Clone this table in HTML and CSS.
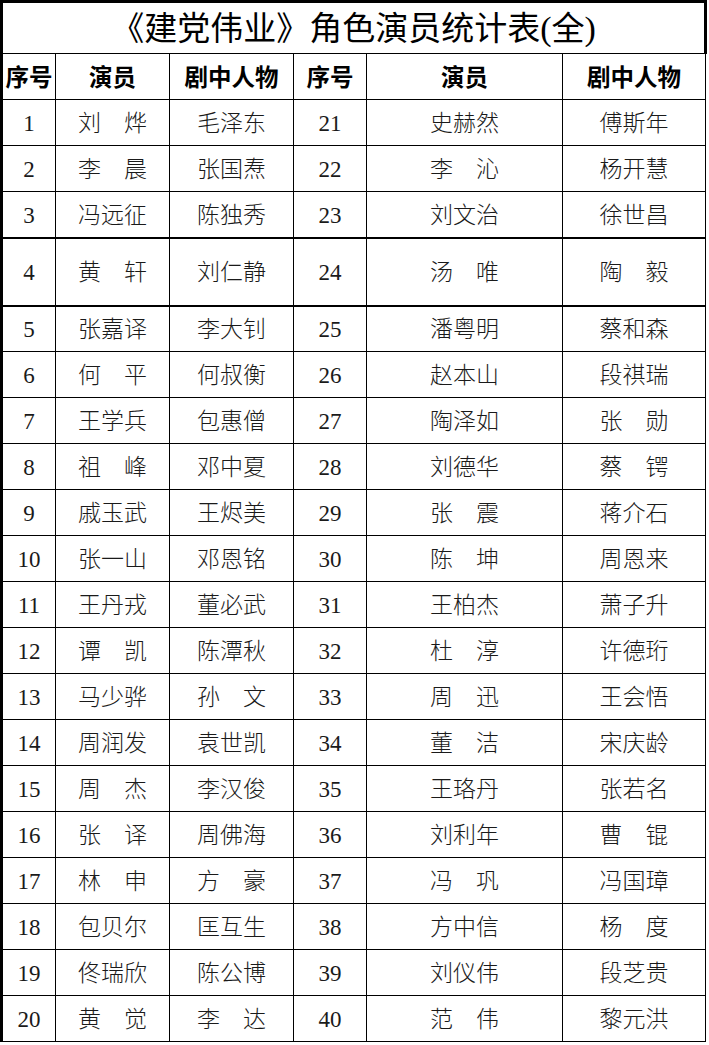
FILE: index.html
```html
<!DOCTYPE html>
<html lang="zh-CN">
<head>
<meta charset="utf-8">
<title>《建党伟业》角色演员统计表(全)</title>
<link rel="stylesheet" href="styles.css">
</head>
<body>
<table class="sheet">
  <colgroup>
    <col class="c-no"><col class="c-actor"><col class="c-role">
    <col class="c-no2"><col class="c-actor2"><col class="c-role2">
  </colgroup>
  <thead>
    <tr class="title-row"><th colspan="6" class="title">《建党伟业》角色演员统计表<span class="paren">(</span>全<span class="paren">)</span></th></tr>
    <tr class="head-row"><th>序号</th><th>演员</th><th>剧中人物</th><th>序号</th><th>演员</th><th>剧中人物</th></tr>
  </thead>
  <tbody>
    <tr><td>1</td><td>刘　烨</td><td>毛泽东</td><td>21</td><td>史赫然</td><td>傅斯年</td></tr>
    <tr><td>2</td><td>李　晨</td><td>张国焘</td><td>22</td><td>李　沁</td><td>杨开慧</td></tr>
    <tr class="r3"><td>3</td><td>冯远征</td><td>陈独秀</td><td>23</td><td>刘文治</td><td>徐世昌</td></tr>
    <tr class="tall"><td>4</td><td>黄　轩</td><td>刘仁静</td><td>24</td><td>汤　唯</td><td>陶　毅</td></tr>
    <tr class="after-tall"><td>5</td><td>张嘉译</td><td>李大钊</td><td>25</td><td>潘粤明</td><td>蔡和森</td></tr>
    <tr><td>6</td><td>何　平</td><td>何叔衡</td><td>26</td><td>赵本山</td><td>段祺瑞</td></tr>
    <tr><td>7</td><td>王学兵</td><td>包惠僧</td><td>27</td><td>陶泽如</td><td>张　勋</td></tr>
    <tr><td>8</td><td>祖　峰</td><td>邓中夏</td><td>28</td><td>刘德华</td><td>蔡　锷</td></tr>
    <tr><td>9</td><td>戚玉武</td><td>王烬美</td><td>29</td><td>张　震</td><td>蒋介石</td></tr>
    <tr><td>10</td><td>张一山</td><td>邓恩铭</td><td>30</td><td>陈　坤</td><td>周恩来</td></tr>
    <tr><td>11</td><td>王丹戎</td><td>董必武</td><td>31</td><td>王柏杰</td><td>萧子升</td></tr>
    <tr><td>12</td><td>谭　凯</td><td>陈潭秋</td><td>32</td><td>杜　淳</td><td>许德珩</td></tr>
    <tr><td>13</td><td>马少骅</td><td>孙　文</td><td>33</td><td>周　迅</td><td>王会悟</td></tr>
    <tr><td>14</td><td>周润发</td><td>袁世凯</td><td>34</td><td>董　洁</td><td>宋庆龄</td></tr>
    <tr><td>15</td><td>周　杰</td><td>李汉俊</td><td>35</td><td>王珞丹</td><td>张若名</td></tr>
    <tr><td>16</td><td>张　译</td><td>周佛海</td><td>36</td><td>刘利年</td><td>曹　锟</td></tr>
    <tr><td>17</td><td>林　申</td><td>方　豪</td><td>37</td><td>冯　巩</td><td>冯国璋</td></tr>
    <tr><td>18</td><td>包贝尔</td><td>匡互生</td><td>38</td><td>方中信</td><td>杨　度</td></tr>
    <tr><td>19</td><td>佟瑞欣</td><td>陈公博</td><td>39</td><td>刘仪伟</td><td>段芝贵</td></tr>
    <tr><td>20</td><td>黄　觉</td><td>李　达</td><td>40</td><td>范　伟</td><td>黎元洪</td></tr>
  </tbody>
</table>
</body>
</html>
```

FILE: styles.css
```css
html, body {
  margin: 0;
  padding: 0;
  background: #ffffff;
}

.sheet {
  border-collapse: collapse;
  table-layout: fixed;
  width: 707px;
  border-left: 3px solid #000;
  border-top: 3px solid #000;
  font-family: "Liberation Serif", "Noto Sans CJK SC", serif;
  color: #1a1a1a;
}

.c-no { width: 54px; }
.c-actor { width: 114px; }
.c-role { width: 124px; }
.c-no2 { width: 73px; }
.c-actor2 { width: 196px; }
.c-role2 { width: 143px; }

.sheet th,
.sheet td {
  border: 1px solid #000;
  padding: 0;
  text-align: center;
  vertical-align: middle;
  white-space: nowrap;
  overflow: hidden;
}

.title-row { height: 52px; }

.title {
  font-family: "Noto Sans CJK SC", sans-serif;
  font-size: 33px;
  font-weight: 400;
  color: #000;
  line-height: 1;
  padding-top: 2px;
  padding-left: 4px;
  border-right: 3px solid #000 !important;
}

.title .paren {
  font-family: "Liberation Serif", serif;
  font-size: 34px;
}

.head-row { height: 46px; }

.head-row th {
  font-family: "Noto Sans CJK SC", sans-serif;
  font-size: 23.5px;
  font-weight: 700;
  color: #000;
  line-height: 1;
}

.sheet tbody tr { height: 46px; }

.sheet td {
  font-size: 23px;
  font-weight: 300;
  line-height: 1;
  padding-top: 2px;
}

.sheet tr.r3 { height: 46px; }

.sheet tr.tall { height: 68px; }

.sheet tr.tall td { border-top: 2px solid #000; }

.sheet tr.after-tall td { border-top: 2px solid #000; }
```
